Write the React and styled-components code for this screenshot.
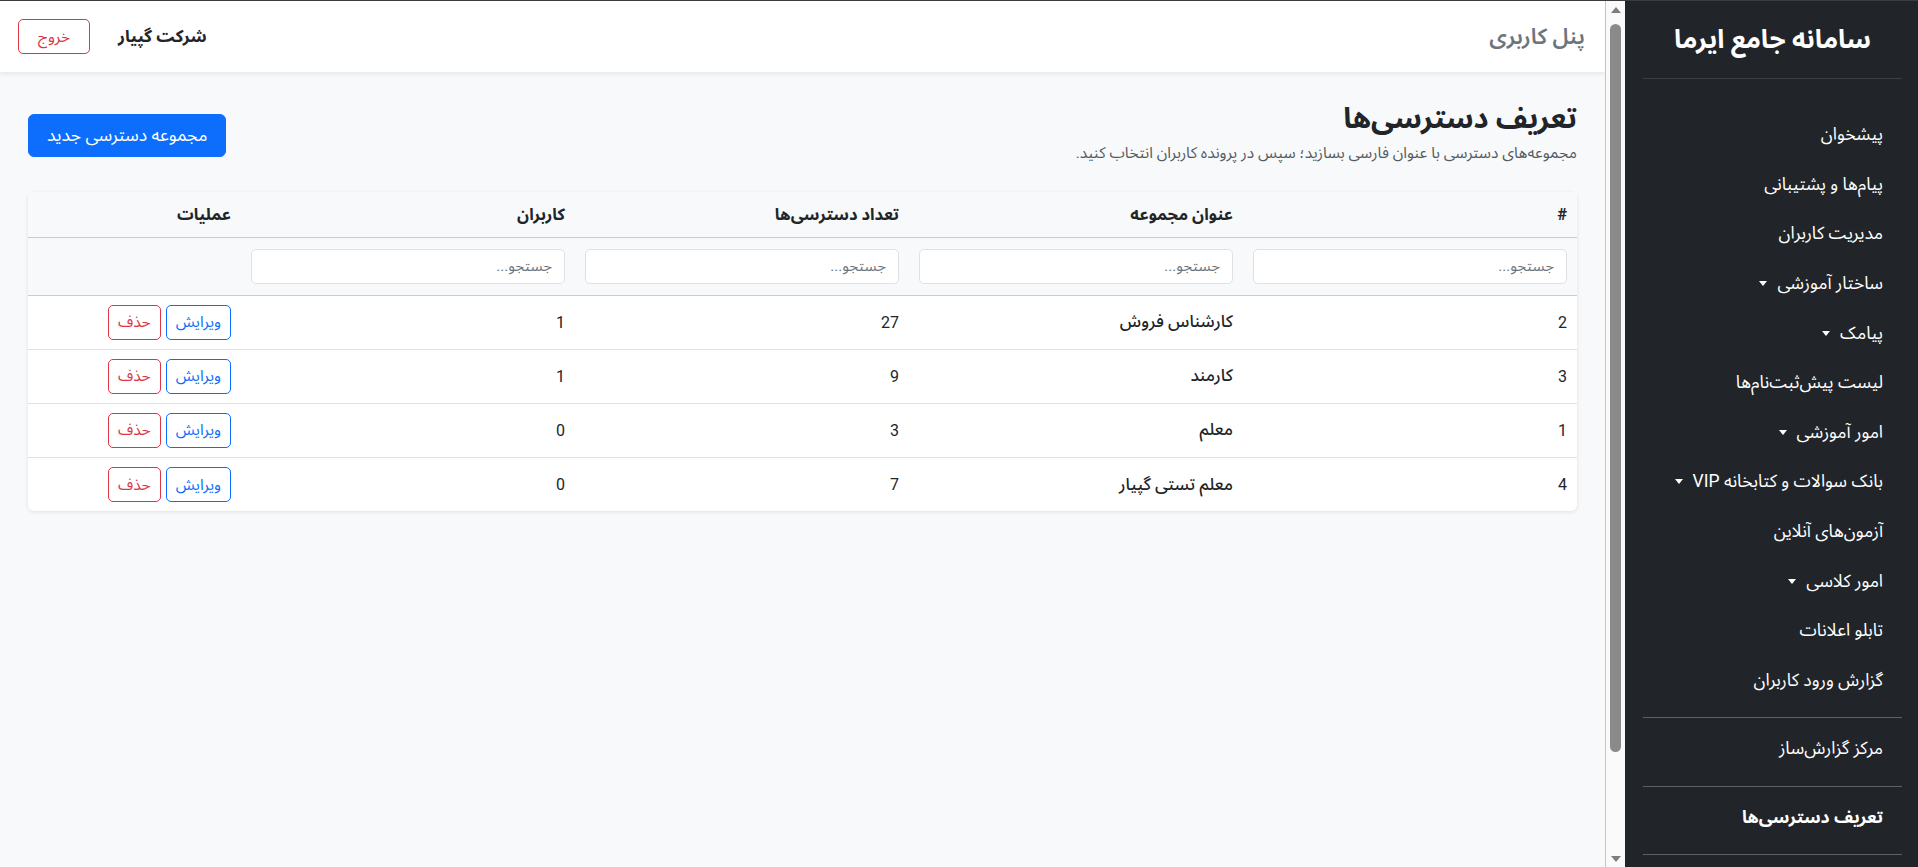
import React from 'react';
import styled, { createGlobalStyle, css } from 'styled-components';

const GlobalStyle = createGlobalStyle`
    html, body {
        margin: 0;
        height: 100%;
        overflow: hidden;
    }
    body {
        font-family: Roboto, "Noto Sans Arabic", "Noto Sans", "DejaVu Sans", sans-serif;
        color: #212529;
    }
    * {
        box-sizing: border-box;
    }
`;

const Shell = styled.div`
    display: flex;
    height: 100vh;
    border-top: 1px solid #3c3c3c;
    direction: ltr;
`;

const Main = styled.main`
    flex: 1;
    min-width: 0;
    overflow: hidden;
    background: #f8f9fa;
    direction: rtl;
`;

/* classic scrollbar of the content pane */
const ScrollRail = styled.div`
    width: 20px;
    flex-shrink: 0;
    background: #fafafa;
    border-left: 1px solid #c4c4c4;
    display: flex;
    flex-direction: column;
    align-items: center;
`;

const RailArrow = styled.div`
    height: 17px;
    display: flex;
    align-items: center;
    justify-content: center;
    &::before {
        content: '';
        border-left: 5px solid transparent;
        border-right: 5px solid transparent;
        ${p => (p.$down
            ? css`border-top: 6px solid #7d7d7d;`
            : css`border-bottom: 6px solid #7d7d7d;`)}
    }
`;

const RailThumb = styled.div`
    width: 11px;
    height: 728px;
    margin-top: 6px;
    background: #8a8a8a;
    border-radius: 6px;
`;

const RailSpace = styled.div`
    flex: 1;
`;

const TopBar = styled.header`
    height: 71px;
    background: #fff;
    box-shadow: 0 2px 5px rgba(0, 0, 0, 0.08);
    display: flex;
    align-items: center;
    justify-content: space-between;
    padding: 0 20px 0 18px;
`;

const PanelTitle = styled.div`
    font-size: 22px;
    font-weight: 600;
    color: #6c757d;
`;

const UserBox = styled.div`
    display: flex;
    align-items: center;
    gap: 28px;
`;

const CompanyName = styled.span`
    font-size: 17px;
    font-weight: 700;
    color: #212529;
`;

const Button = styled.button`
    font-family: inherit;
    cursor: pointer;
    background: ${p => (p.$solid ? '#0d6efd' : '#fff')};
    border: 1px solid ${p => (p.$tone === 'danger' ? '#dc3545' : '#0d6efd')};
    color: ${p => (p.$solid ? '#fff' : p.$tone === 'danger' ? '#dc3545' : '#0d6efd')};
    font-size: ${p => (p.$big ? '17.5px' : '15.5px')};
    height: ${p => (p.$big ? '43px' : '35px')};
    padding: ${p => (p.$big ? '0 18px' : p.$wide ? '0 19px' : '0 9px')};
    border-radius: ${p => (p.$big ? '6px' : '5px')};
`;

const Content = styled.div`
    padding: 30px 28px 40px;
`;

const PageHead = styled.div`
    display: flex;
    align-items: center;
    justify-content: space-between;
    margin-bottom: 23px;
`;

const Heading = styled.h1`
    margin: 0 0 2px;
    font-size: 29px;
    font-weight: 700;
    line-height: 1.15;
`;

const Lead = styled.p`
    margin: 0;
    font-size: 15.5px;
    color: #555b61;
`;

const Table = styled.table`
    width: 100%;
    table-layout: fixed;
    border-collapse: collapse;
    background: #fff;
    box-shadow: 0 1px 4px rgba(0, 0, 0, 0.1);
    border-radius: 6px;
`;

const Th = styled.th`
    width: ${p => p.$w || 'auto'};
    height: 45px;
    padding: 0 10px;
    text-align: right;
    font-size: 16.5px;
    font-weight: 700;
    background: #f8f9fa;
    border-bottom: 1px solid #c9ccd0;
`;

const FilterCell = styled.td`
    height: 58px;
    padding: 0 10px;
    background: #f8f9fa;
    border-bottom: 1px solid #c9ccd0;
`;

const SearchInput = styled.input`
    width: 100%;
    height: 35px;
    padding: 0 12px;
    font-family: inherit;
    font-size: 15px;
    border: 1px solid #dee2e6;
    border-radius: 5px;
    background: #fff;
    direction: rtl;
    &::placeholder {
        color: #6c757d;
    }
`;

const Row = styled.tr`
    &:last-child td {
        border-bottom: none;
    }
`;

const Td = styled.td`
    height: 54px;
    padding: 0 10px;
    font-size: 16px;
    border-bottom: 1px solid #dee2e6;
    ${p => p.$strong && css`
        font-size: 17px;
        font-weight: 500;
    `}
`;

const Actions = styled.div`
    display: flex;
    gap: 5px;
`;

const Sidebar = styled.aside`
    width: 293px;
    flex-shrink: 0;
    background: #212529;
    color: #fff;
    direction: rtl;
    padding: 0 16px 0 18px;
    display: flex;
    flex-direction: column;
`;

const Brand = styled.div`
    height: 78px;
    display: flex;
    align-items: center;
    justify-content: center;
    font-size: 26px;
    font-weight: 700;
    border-bottom: 1px solid #3b4046;
`;

const NavList = styled.nav`
    padding-top: 31px;
    display: flex;
    flex-direction: column;
`;

const NavLink = styled.a`
    display: flex;
    align-items: center;
    gap: 10px;
    height: 49.6px;
    padding: 0 19px;
    font-size: 17.5px;
    color: #fff;
    text-decoration: none;
    font-weight: ${p => (p.$active ? 700 : 400)};

    ${p => p.$menu && css`
        &::after {
            content: '';
            border-top: 5px solid #fff;
            border-left: 4px solid transparent;
            border-right: 4px solid transparent;
        }
    `}
`;

const Divider = styled.hr`
    width: 100%;
    border: 0;
    border-top: 1px solid #5c6166;
    margin: 12px 0 6px;
`;

const navItems = [
    { label: 'پیشخوان' },
    { label: 'پیام‌ها و پشتیبانی' },
    { label: 'مدیریت کاربران' },
    { label: 'ساختار آموزشی', menu: true },
    { label: 'پیامک', menu: true },
    { label: 'لیست پیش‌ثبت‌نام‌ها' },
    { label: 'امور آموزشی', menu: true },
    { label: 'بانک سوالات و کتابخانه VIP', menu: true },
    { label: 'آزمون‌های آنلاین' },
    { label: 'امور کلاسی', menu: true },
    { label: 'تابلو اعلانات' },
    { label: 'گزارش ورود کاربران' },
];

const groups = [
    { id: 2, title: 'کارشناس فروش', perms: 27, users: 1 },
    { id: 3, title: 'کارمند', perms: 9, users: 1 },
    { id: 1, title: 'معلم', perms: 3, users: 0 },
    { id: 4, title: 'معلم تستی گپیار', perms: 7, users: 0 },
];

const App = () => {
    return (
        <>
            <GlobalStyle />
            <Shell>
                <Main>
                    <TopBar>
                        <PanelTitle>پنل کاربری</PanelTitle>
                        <UserBox>
                            <CompanyName>شرکت گپیار</CompanyName>
                            <Button $tone="danger" $wide>خروج</Button>
                        </UserBox>
                    </TopBar>

                    <Content>
                        <PageHead>
                            <div>
                                <Heading>تعریف دسترسی‌ها</Heading>
                                <Lead>مجموعه‌های دسترسی با عنوان فارسی بسازید؛ سپس در پرونده کاربران انتخاب کنید.</Lead>
                            </div>
                            <Button $solid $big>مجموعه دسترسی جدید</Button>
                        </PageHead>

                        <Table>
                            <thead>
                                <tr>
                                    <Th $w="334px">#</Th>
                                    <Th $w="334px">عنوان مجموعه</Th>
                                    <Th $w="334px">تعداد دسترسی‌ها</Th>
                                    <Th $w="334px">کاربران</Th>
                                    <Th>عملیات</Th>
                                </tr>
                                <tr>
                                    <FilterCell><SearchInput placeholder="جستجو..." /></FilterCell>
                                    <FilterCell><SearchInput placeholder="جستجو..." /></FilterCell>
                                    <FilterCell><SearchInput placeholder="جستجو..." /></FilterCell>
                                    <FilterCell><SearchInput placeholder="جستجو..." /></FilterCell>
                                    <FilterCell />
                                </tr>
                            </thead>
                            <tbody>
                                {groups.map(g => (
                                    <Row key={g.id}>
                                        <Td>{g.id}</Td>
                                        <Td $strong>{g.title}</Td>
                                        <Td>{g.perms}</Td>
                                        <Td>{g.users}</Td>
                                        <Td>
                                            <Actions>
                                                <Button>ویرایش</Button>
                                                <Button $tone="danger">حذف</Button>
                                            </Actions>
                                        </Td>
                                    </Row>
                                ))}
                            </tbody>
                        </Table>
                    </Content>
                </Main>

                <ScrollRail>
                    <RailArrow />
                    <RailThumb />
                    <RailSpace />
                    <RailArrow $down />
                </ScrollRail>

                <Sidebar>
                    <Brand>سامانه جامع ایرما</Brand>
                    <NavList>
                        {navItems.map(item => (
                            <NavLink key={item.label} href="#" $menu={item.menu}>
                                {item.label}
                            </NavLink>
                        ))}
                        <Divider />
                        <NavLink href="#">مرکز گزارش‌ساز</NavLink>
                        <Divider />
                        <NavLink href="#" $active>تعریف دسترسی‌ها</NavLink>
                        <Divider />
                    </NavList>
                </Sidebar>
            </Shell>
        </>
    );
};

export default App;
